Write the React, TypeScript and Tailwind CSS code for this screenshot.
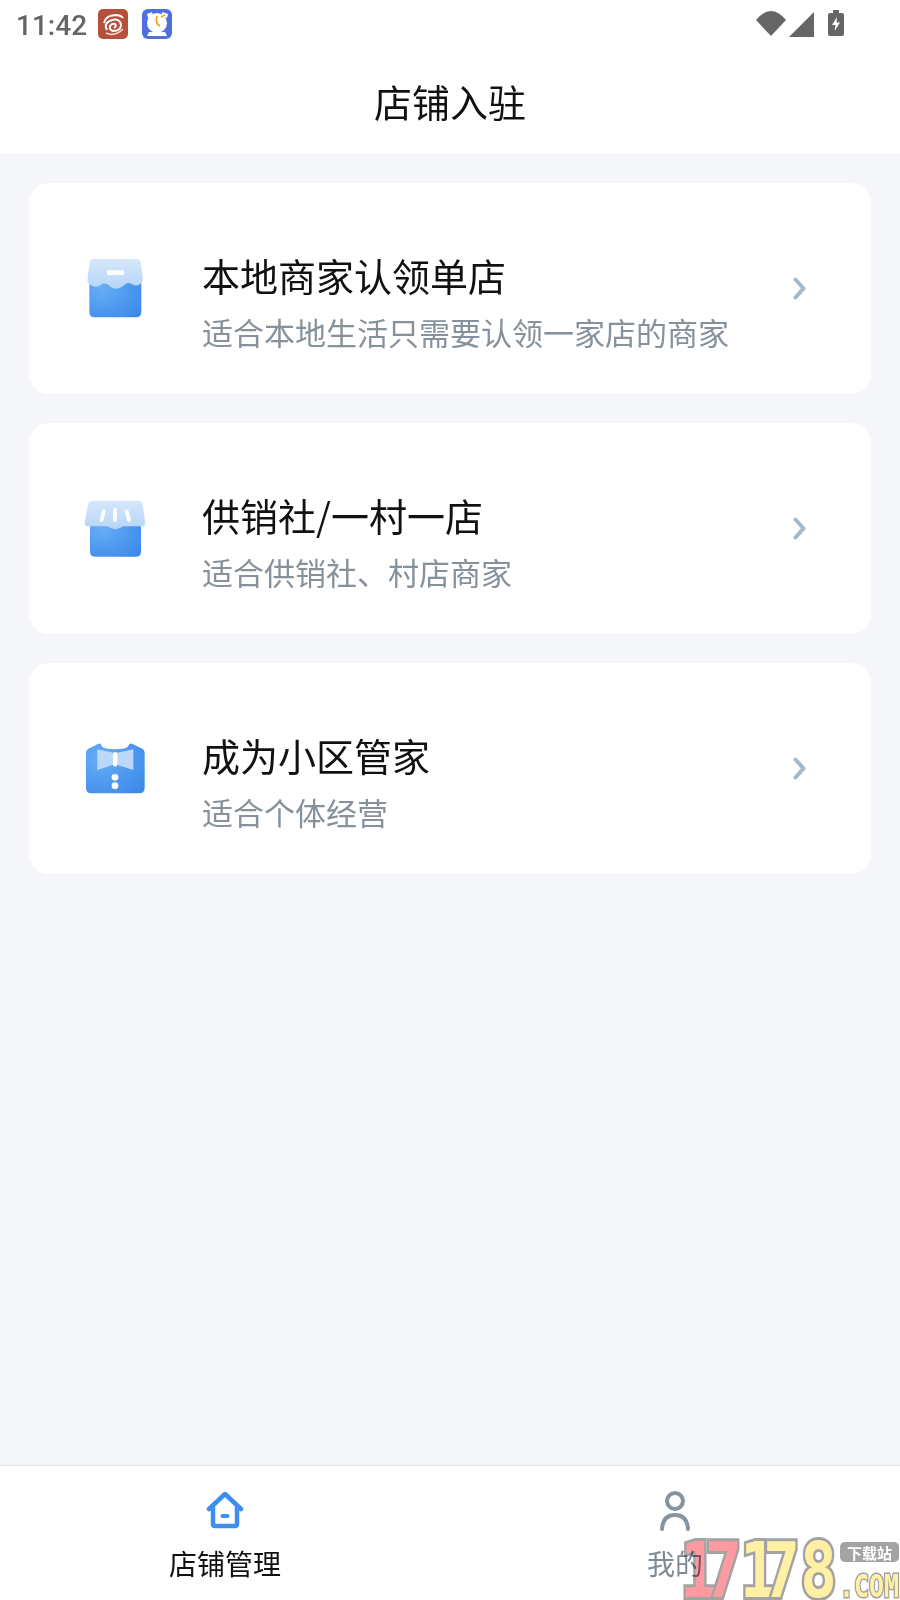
import React from "react";

function Defs({ id }: { id: string }) {
  return (
    <defs>
      <linearGradient id={`${id}-lid`} x1="0" y1="0" x2="0" y2="1">
        <stop offset="0" stopColor="#d6e7fb" />
        <stop offset="1" stopColor="#b6d5f8" />
      </linearGradient>
      <radialGradient id={`${id}-body`} cx="0.25" cy="0.3" r="0.9">
        <stop offset="0" stopColor="#66aef6" />
        <stop offset="1" stopColor="#3d8aea" />
      </radialGradient>
    </defs>
  );
}

function BoxIcon() {
  return (
    <svg width="90" height="90" viewBox="0 0 270 270" className="mb-[7px] shrink-0 blur-[0.7px]">
      <Defs id="a" />
      <path d="M58 110 H214 V216 Q214 232 198 232 H74 Q58 232 58 216 Z" fill="url(#a-body)" />
      <path
        d="M72 57 H200 Q212 57 213 70 L219 124 Q206 142 188 134 Q175 122 160 137 Q136 156 118 137 Q102 124 88 138 Q66 146 52 124 L58 70 Q60 57 72 57 Z"
        fill="url(#a-lid)"
      />
      <rect x="111" y="91" width="51" height="14" rx="4" fill="#ffffff" />
    </svg>
  );
}

function StoreIcon() {
  return (
    <svg width="90" height="90" viewBox="0 0 270 270" className="mb-[7px] shrink-0 blur-[0.7px]">
      <Defs id="b" />
      <path d="M60 110 H213 V215 Q213 230 197 230 H76 Q60 230 60 215 Z" fill="url(#b-body)" />
      <path
        d="M70 62 H205 Q216 62 218 74 L226 130 Q226 139 218 139 H160 Q136 156 112 139 H52 Q44 139 44 130 L54 74 Q56 62 70 62 Z"
        fill="url(#b-lid)"
      />
      <path d="M101 94 L95 120 M135 89 V121 M170 94 L177 120" stroke="#ffffff" strokeWidth="11" strokeLinecap="round" fill="none" />
    </svg>
  );
}

function ShirtIcon() {
  return (
    <svg width="90" height="90" viewBox="0 0 270 270" className="mb-[7px] shrink-0 blur-[0.7px]">
      <Defs id="c" />
      <path
        d="M48 100 Q48 88 60 84 L84 72 Q92 68 95 78 Q100 88 135 88 Q170 88 175 78 Q178 68 188 72 L212 84 Q224 88 224 100 V204 Q224 220 208 220 H64 Q48 220 48 204 Z"
        fill="url(#c-body)"
      />
      <path d="M82 88 L130 98 V134 L82 150 Z" fill="#bcd8f9" />
      <path d="M190 88 L140 98 V134 L190 150 Z" fill="#bcd8f9" />
      <rect x="129" y="96" width="13" height="44" rx="6.5" fill="#ffffff" />
      <circle cx="135" cy="172" r="10" fill="#ffffff" />
      <circle cx="135" cy="197" r="10" fill="#ffffff" />
    </svg>
  );
}

function Chevron() {
  return (
    <svg width="13" height="23" viewBox="0 0 13 23" className="shrink-0">
      <path d="M2.5 2.5 L10.5 11.5 L2.5 20.5" fill="none" stroke="#a6b8c7" strokeWidth="4" strokeLinecap="round" strokeLinejoin="round" />
    </svg>
  );
}

function Card({ icon, title, sub }: { icon: React.ReactNode; title: string; sub: string }) {
  return (
    <div className="flex h-[211px] items-center rounded-[20px] bg-white pl-[41px] pr-[65px]">
      {icon}
      <div className="ml-[42px] mt-[30px] flex flex-1 flex-col">
        <div className="text-[38px] leading-[50px] text-[#111111]">{title}</div>
        <div className="mt-[7px] text-[31px] leading-[50px] text-[#86919c]">{sub}</div>
      </div>
      <Chevron />
    </div>
  );
}

function StatusBar() {
  return (
    <div className="flex h-[52px] items-center bg-white pl-[16px]">
      <span className="w-[82px] text-[28px] leading-[50px] font-medium text-[#666666] [font-family:Roboto,sans-serif]">11:42</span>
      <svg width="30" height="30" viewBox="0 0 30 30" className="mb-[4px] shrink-0">
        <rect width="30" height="30" rx="5" fill="#b5503c" />
        <path d="M6 14 Q7 7 17 6 Q23 6 25 9" fill="none" stroke="#ffffff" strokeWidth="1.8" />
        <path d="M9 21 Q5 14 14 11 Q22 9 23 16 Q23 22 15 22 Q11 21 12 17 Q14 14 17 15 Q19 17 16 19" fill="none" stroke="#ffffff" strokeWidth="2" />
        <path d="M8 24 Q17 28 25 20" fill="none" stroke="#f3d8d2" strokeWidth="1.6" />
      </svg>
      <svg width="30" height="30" viewBox="0 0 30 30" className="mb-[4px] ml-[14px] shrink-0">
        <rect width="30" height="30" rx="6" fill="#4e6fdc" />
        <circle cx="15" cy="14" r="10" fill="#ffffff" />
        <path d="M5 5 L10 3 L11 7 L6 9 Z" fill="#ffffff" />
        <path d="M20 3 L26 5 L25 9 L20 7 Z" fill="#ffffff" />
        <path d="M15 7 Q13 15 18 17" fill="none" stroke="#eca420" strokeWidth="1.8" />
        <path d="M19 8 L23 6" fill="none" stroke="#eca420" strokeWidth="1.5" />
        <path d="M7 23 H23 L25 27 H5 Z" fill="#ffffff" />
      </svg>
      <svg width="30" height="26" viewBox="0 0 30 26" className="mb-[5px] ml-[584px] shrink-0">
        <path d="M0 9 Q15 -9 30 9 L15 25 Z" fill="#666666" />
      </svg>
      <svg width="25" height="25" viewBox="0 0 25 25" className="mb-[3px] ml-[3px] shrink-0">
        <path d="M25 0 V25 H0 Z" fill="#666666" />
      </svg>
      <svg width="16" height="26" viewBox="0 0 16 26" className="mb-[6px] ml-[14px] shrink-0">
        <path d="M5 0 H11 V3 H14 Q16 3 16 5 V24 Q16 26 14 26 H2 Q0 26 0 24 V5 Q0 3 2 3 H5 Z" fill="#666666" />
        <path d="M9 7 L4 15 H7.5 L6.5 21 L12 12.5 H8.5 Z" fill="#ffffff" />
      </svg>
    </div>
  );
}

function Watermark() {
  const digit =
    "inline-block text-center text-[76px] leading-[60px] font-black scale-x-[.8] [font-family:'DejaVu_Sans_Mono',monospace] [-webkit-text-stroke:6px_#a3a3a3] [paint-order:stroke_fill]";
  return (
    <div className="pointer-events-none absolute bottom-0 left-[678px] h-[60px] w-[222px] mix-blend-multiply">
      <div className="flex h-[60px] items-center pt-[2px]">
        <span className={`${digit} w-[22px] text-[#ff9aa0]`}>1</span>
        <span className={`${digit} ml-[2px] w-[30px] text-[#ff9aa0]`}>7</span>
        <span className={`${digit} ml-[6px] w-[20px] text-[#fff0a3]`}>1</span>
        <span className={`${digit} ml-[2px] w-[33px] text-[#fff0a3]`}>7</span>
        <span className={`${digit} ml-[4px] w-[33px] text-[#fff0a3]`}>8</span>
      </div>
      <div className="absolute right-[1px] top-[2px] flex h-[20px] w-[59px] items-center justify-center rounded-[5px] bg-[#a3a3a3] text-[15px] leading-none font-bold text-white">
        下载站
      </div>
      <div className="absolute bottom-0 right-[1px] origin-right scale-x-[.78] text-[32px] leading-[27px] font-bold text-[#fff0a3] [font-family:'DejaVu_Sans_Mono',monospace] [-webkit-text-stroke:3px_#a3a3a3] [paint-order:stroke_fill]">
        .COM
      </div>
    </div>
  );
}

export default function App() {
  return (
    <div className="relative flex h-[1600px] w-[900px] flex-col overflow-hidden bg-[#f4f6fa] [font-family:'Noto_Sans_CJK_SC','Noto_Sans',sans-serif]">
      <StatusBar />
      <div className="flex h-[102px] items-center justify-center bg-white pb-[6px] text-[38px] text-[#111111]">店铺入驻</div>
      <main className="flex flex-1 flex-col gap-[29px] px-[29px] pt-[29px]">
        <Card icon={<BoxIcon />} title="本地商家认领单店" sub="适合本地生活只需要认领一家店的商家" />
        <Card icon={<StoreIcon />} title="供销社/一村一店" sub="适合供销社、村店商家" />
        <Card icon={<ShirtIcon />} title="成为小区管家" sub="适合个体经营" />
      </main>
      <nav className="flex h-[135px] border-t border-[#e3e5ea] bg-white">
        <div className="flex flex-1 flex-col items-center pt-[25px]">
          <svg width="38" height="38" viewBox="0 0 38 38" className="shrink-0">
            <path d="M3 18 L19 3 L35 18 M7 15 V33 Q7 35 9 35 H29 Q31 35 31 33 V15" fill="none" stroke="#3d8eee" strokeWidth="4.5" strokeLinecap="round" strokeLinejoin="round" />
            <rect x="14.5" y="23" width="9" height="4" rx="2" fill="#3d8eee" />
          </svg>
          <span className="mt-[14px] text-[28px] leading-[40px] text-[#111111]">店铺管理</span>
        </div>
        <div className="flex flex-1 flex-col items-center pt-[25px]">
          <svg width="32" height="40" viewBox="0 0 32 40" className="shrink-0">
            <circle cx="16" cy="10" r="8" fill="none" stroke="#8693a0" strokeWidth="4" />
            <path d="M3 38 Q4 24 16 24 Q28 24 29 38" fill="none" stroke="#8693a0" strokeWidth="4" strokeLinecap="round" />
          </svg>
          <span className="mt-[12px] text-[28px] leading-[40px] text-[#7e8a96]">我的</span>
        </div>
      </nav>
      <Watermark />
    </div>
  );
}
